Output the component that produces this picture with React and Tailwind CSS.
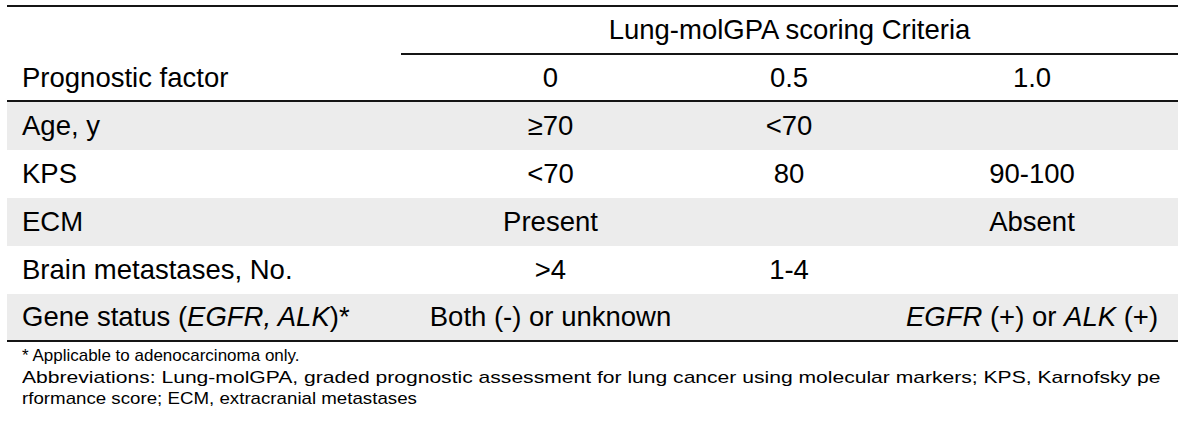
import React from "react";

const cols = "grid grid-cols-[394px_299px_178px_300px]";

function Row({ gray, cells, last }) {
  return (
    <div
      className={`${cols} h-[48px] items-center ${gray ? "bg-[#ececec]" : "bg-white"} ${
        last ? "border-b-2 border-[#151515]" : ""
      }`}
    >
      <div className="pl-[15px] whitespace-nowrap">{cells[0]}</div>
      <div className="text-center whitespace-nowrap">{cells[1]}</div>
      <div className="text-center whitespace-nowrap">{cells[2]}</div>
      <div className="text-center whitespace-nowrap pl-[8px]">{cells[3]}</div>
    </div>
  );
}

export default function App() {
  return (
    <div className="w-[1186px] h-[433px] bg-white text-black font-['Liberation_Sans',Arial,sans-serif] overflow-hidden">
      <div className="pt-[5px] pl-[7px] w-[1178px]">
        <div className="border-t-2 border-[#151515] text-[27.5px] leading-none">
          <div className={`${cols} h-[48px]`}>
            <div />
            <div className="col-span-3 flex items-center justify-center border-b-2 border-[#151515] pb-[1px]">
              Lung-molGPA scoring Criteria
            </div>
          </div>
          <div className={`${cols} h-[47px] items-center border-b-2 border-[#151515] pt-[1px]`}>
            <div className="pl-[15px]">Prognostic factor</div>
            <div className="text-center">0</div>
            <div className="text-center">0.5</div>
            <div className="text-center pl-[8px]">1.0</div>
          </div>
          <Row gray cells={["Age, y", "≥70", "<70", ""]} />
          <Row cells={["KPS", "<70", "80", "90-100"]} />
          <Row gray cells={["ECM", "Present", "", "Absent"]} />
          <Row cells={["Brain metastases, No.", ">4", "1-4", ""]} />
          <Row
            gray
            last
            cells={[
              <span>
                Gene status (<i>EGFR, ALK</i>)*
              </span>,
              "Both (-) or unknown",
              "",
              <span>
                <i>EGFR</i> (+) or <i>ALK</i> (+)
              </span>,
            ]}
          />
        </div>
        <div className="pl-[15px] pt-[3px] text-[17px] leading-[21.5px]">
          <div className="whitespace-nowrap">* Applicable to adenocarcinoma only.</div>
          <div className="whitespace-nowrap w-max origin-left scale-x-[1.24]">
            Abbreviations: Lung-molGPA, graded prognostic assessment for lung cancer using molecular markers; KPS, Karnofsky pe
          </div>
          <div className="whitespace-nowrap w-max origin-left scale-x-[1.1]">rformance score; ECM, extracranial metastases</div>
        </div>
      </div>
    </div>
  );
}
